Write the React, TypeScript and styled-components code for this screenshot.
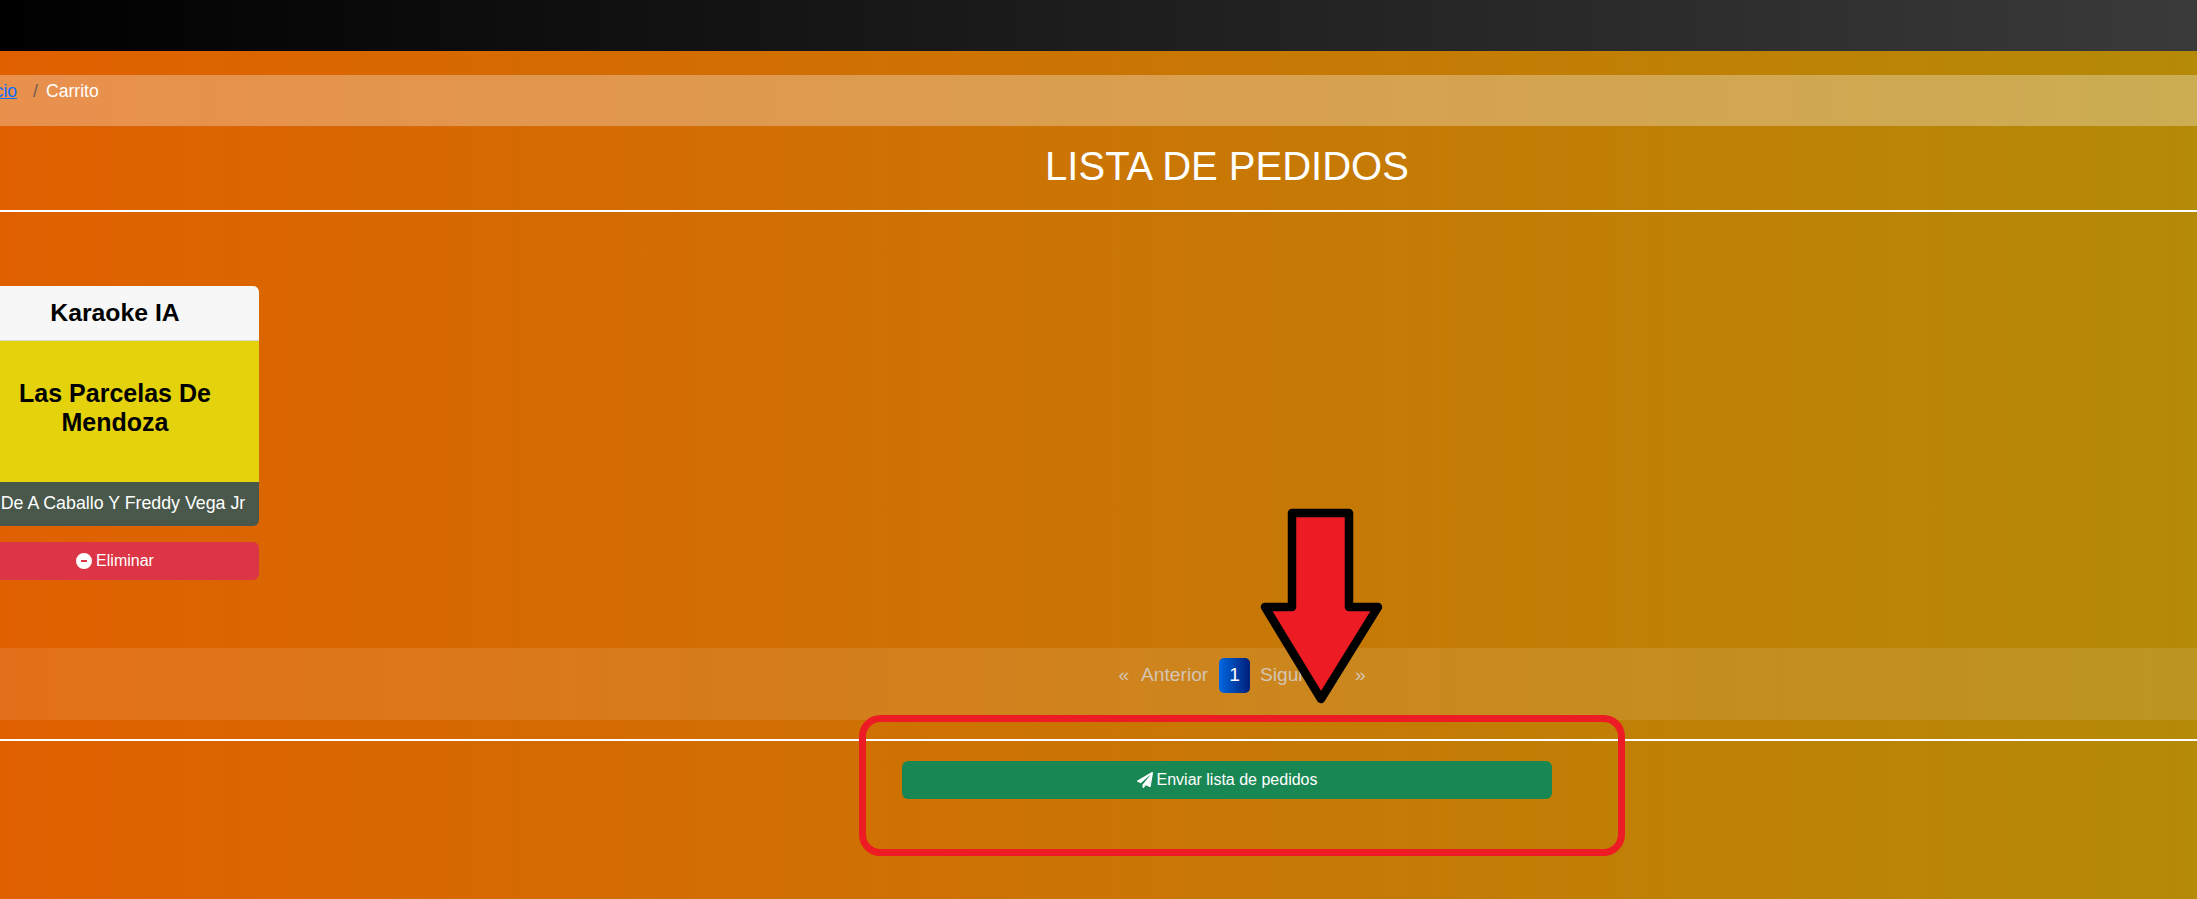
import React from 'react'
import styled, { createGlobalStyle } from 'styled-components'
import { FaPaperPlane } from 'react-icons/fa'

const GlobalStyle = createGlobalStyle`
  html, body {
    margin: 0;
    padding: 0;
    overflow: hidden;
  }
  body {
    font-family: "Liberation Sans", Arial, sans-serif;
    font-size: 16px;
    color: #fff;
  }
`

const Page = styled.div`
  position: relative;
  width: 100%;
  height: 899px;
  overflow: hidden;
  background: linear-gradient(to right, #e06000, #b58a08);
`

const Navbar = styled.div`
  height: 51px;
  background: linear-gradient(to right, #000, #3a3a3a);
`

const Content = styled.main`
  width: 2532px;
  margin: 24px 0 0 -40px;
`

const Breadcrumb = styled.nav`
  display: flex;
  height: 51px;
  box-sizing: border-box;
  padding: 4px 16px 0;
  font-size: 17.6px;
  line-height: 25px;
  background: rgba(255, 255, 255, 0.3);
`

const CrumbLink = styled.a`
  color: #0d6efd;
  text-decoration: underline;
`

const CrumbSeparator = styled.span`
  margin: 0 8px 0 16px;
  color: #6c5c50;
`

const Title = styled.h1`
  margin: 16px 0 20px;
  padding-left: 2px;
  font-size: 40px;
  font-weight: 400;
  line-height: 48px;
  text-align: center;
`

const Rule = styled.hr`
  height: 2px;
  margin: 0;
  border: 0;
  background: #fff;
`

const LowerRule = styled(Rule)`
  margin-top: 19px;
`

const CardColumn = styled.section`
  display: flex;
  flex-direction: column;
  gap: 16px;
  width: 288px;
  margin: 74px 0 68px 11px;
`

const Card = styled.article`
  overflow: hidden;
  border-radius: 6px;
  text-align: center;
`

const CardHeader = styled.header`
  height: 54px;
  box-sizing: border-box;
  font-size: 24.8px;
  font-weight: 700;
  line-height: 54px;
  color: #000;
  background: #f7f7f7;
`

const CardBody = styled.div`
  display: flex;
  align-items: center;
  justify-content: center;
  height: 142px;
  box-sizing: border-box;
  padding: 0 16px 7px;
  border-top: 1px solid #d8d8d0;
  font-size: 25px;
  font-weight: 700;
  line-height: 29px;
  color: #000;
  background: #e3d20c;
`

const CardFooter = styled.footer`
  height: 44px;
  padding-left: 16px;
  font-size: 17.8px;
  line-height: 43px;
  white-space: nowrap;
  background: #49584b;
`

const Button = styled.button<{ $tone: string }>`
  display: flex;
  align-items: center;
  justify-content: center;
  gap: 4px;
  width: 100%;
  height: 38px;
  padding: 0;
  border: 0;
  border-radius: 6px;
  font: inherit;
  color: #fff;
  background: ${(p) => p.$tone};
`

const PaginationBand = styled.nav`
  height: 72px;
  box-sizing: border-box;
  padding-top: 10px;
  background: rgba(255, 255, 255, 0.1);
`

const PageList = styled.ul`
  display: flex;
  justify-content: center;
  margin: 0;
  padding: 0 0 0 32px;
  list-style: none;
  font-size: 19.2px;
  line-height: 23px;
`

const PageItem = styled.li<{ $edge?: boolean }>`
  padding: 5px ${(p) => (p.$edge ? '2px' : '10px')} 7px;
  color: #d3c5b4;

  &:nth-child(2) {
    padding-right: 11px;
  }

  &:last-child {
    margin-left: 3px;
  }
`

const ActivePage = styled(PageItem)`
  border-radius: 5px;
  color: #fff;
  background: linear-gradient(to right, #0068e0, #001f7a);
`

const SubmitRow = styled.div`
  width: 650px;
  margin: 20px 0 0 942px;
`

const Annotation = styled.svg`
  position: absolute;
  top: 0;
  left: 0;
  pointer-events: none;
`

const MinusCircle = () => (
  <svg width="16" height="16" viewBox="0 0 16 16">
    <path
      fill="#fff"
      fillRule="evenodd"
      d="M16 8A8 8 0 1 1 0 8a8 8 0 0 1 16 0zM5 7v2h6V7H5z"
    />
  </svg>
)

export default function App() {
  return (
    <Page>
      <GlobalStyle />
      <Navbar />
      <Content>
        <Breadcrumb>
          <CrumbLink href="#">Inicio</CrumbLink>
          <CrumbSeparator>/</CrumbSeparator>
          <span>Carrito</span>
        </Breadcrumb>
        <Title>LISTA DE PEDIDOS</Title>
        <Rule />
        <CardColumn>
          <Card>
            <CardHeader>Karaoke IA</CardHeader>
            <CardBody>Las Parcelas De Mendoza</CardBody>
            <CardFooter>De A Caballo Y Freddy Vega Jr</CardFooter>
          </Card>
          <Button $tone="#dc3545">
            <MinusCircle />
            Eliminar
          </Button>
        </CardColumn>
        <PaginationBand>
          <PageList>
            <PageItem $edge>«</PageItem>
            <PageItem>Anterior</PageItem>
            <ActivePage>1</ActivePage>
            <PageItem>Siguiente</PageItem>
            <PageItem $edge>»</PageItem>
          </PageList>
        </PaginationBand>
        <LowerRule />
        <SubmitRow>
          <Button $tone="#198754">
            <FaPaperPlane size={16} />
            Enviar lista de pedidos
          </Button>
        </SubmitRow>
      </Content>
      <Annotation width="2197" height="899" viewBox="0 0 2197 899">
        <rect x="862.5" y="718.5" width="759" height="134" rx="18" fill="none" stroke="#ed1c24" strokeWidth="7" />
        <path
          d="M1292 513H1349V607H1378L1321 699L1265 607H1292Z"
          fill="#ed1c24"
          stroke="#000"
          strokeWidth="8.5"
          strokeLinejoin="round"
        />
      </Annotation>
    </Page>
  )
}
